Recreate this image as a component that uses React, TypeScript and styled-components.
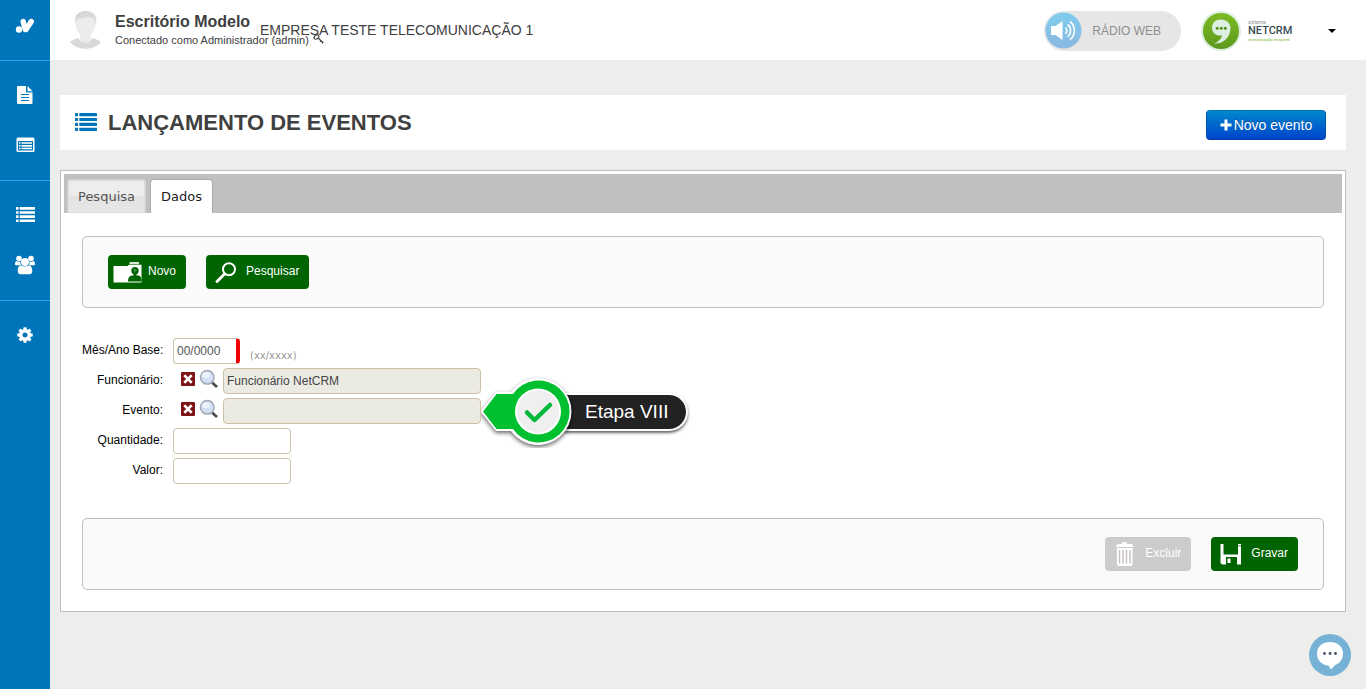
import React from "react";
import styled, { createGlobalStyle, css } from "styled-components";

const colors = {
  blue: "#0075b9",
  blueLine: "#2ba3ee",
  page: "#ededeb",
  text: "#404040",
  green: "#006400",
  line: "#bfbfbf",
  field: "#cdc0a6",
};

const GlobalStyle = createGlobalStyle`
  *, *::before, *::after { box-sizing: border-box; }
  body {
    margin: 0;
    background: ${colors.page};
    color: ${colors.text};
    font-family: "Liberation Sans", Arial, sans-serif;
    font-size: 12px;
  }
  button, input { font-family: inherit; margin: 0; }
  svg { display: block; flex: none; }
`;

const Page = styled.div`
  display: flex;
  min-height: 100vh;
`;

/* ---------- sidebar ---------- */

const Sidebar = styled.nav`
  flex: none;
  width: 50px;
  background: ${colors.blue};
`;

const Brand = styled.a`
  display: flex;
  align-items: center;
  justify-content: center;
  height: 60px;
  padding-bottom: 8px;
`;

const NavGroup = styled.div`
  min-height: 120px;
  padding-top: 9px;
  border-top: 1px solid ${colors.blueLine};
`;

const NavLink = styled.a`
  display: flex;
  align-items: center;
  justify-content: center;
  height: 50px;
  color: #fff;
`;

/* ---------- header ---------- */

const Main = styled.div`
  flex: 1;
  min-width: 0;
`;

const Header = styled.header`
  display: flex;
  align-items: center;
  height: 60px;
  padding: 1px 30px 0 18px;
  background: #fff;
`;

const User = styled.div`
  width: 145px;
  height: 40px;
  margin-left: 12px;
  white-space: nowrap;
`;

const Office = styled.div`
  font-size: 16px;
  font-weight: bold;
  line-height: 22px;
`;

const Account = styled.div`
  display: flex;
  align-items: center;
  gap: 4px;
  font-size: 11px;
  line-height: 14px;
`;

const Company = styled.div`
  flex: 1;
  padding-bottom: 2px;
  font-size: 14px;
  line-height: 16px;
  white-space: nowrap;
`;

const RadioButton = styled.button`
  display: flex;
  align-items: center;
  gap: 10px;
  height: 40px;
  padding: 0 20px 0 1px;
  border: 0;
  border-radius: 20px;
  background: #e6e6e6;
  color: #8f8f8f;
  font-size: 12px;
`;

const Product = styled.div`
  display: flex;
  align-items: center;
  gap: 7px;
  margin-left: 20px;
`;

const ProductText = styled.div`
  width: 45px;
  font-family: Roboto, sans-serif;
  white-space: nowrap;
`;

const ProductLine = styled.div<{ $green?: boolean }>`
  font-size: ${(p) => (p.$green ? 4 : 5)}px;
  line-height: 5px;
  color: ${(p) => (p.$green ? "#7fb93a" : "#8a969c")};
`;

const ProductName = styled.div`
  font-size: 11px;
  line-height: 12px;
  font-weight: 500;
  color: #3b4b55;
`;

const Caret = styled.button`
  margin-left: 35px;
  padding: 0;
  border: 0;
  background: none;
`;

/* ---------- title ---------- */

const Content = styled.main`
  padding: 35px 20px 0 10px;
`;

const TitleBar = styled.section`
  display: flex;
  align-items: center;
  height: 55px;
  padding: 0 20px 0 15px;
  background: #fff;
`;

const Title = styled.h1`
  flex: 1;
  margin: 0 0 0 11px;
  font-size: 22px;
  line-height: 30px;
`;

const NewEvent = styled.button`
  display: flex;
  align-items: center;
  justify-content: center;
  gap: 2px;
  width: 120px;
  height: 30px;
  padding: 0;
  margin-top: 4px;
  border: 1px solid #0055b3;
  border-color: #0077b3 #0055b3 #003da8;
  border-radius: 4px;
  background: linear-gradient(#0088cc, #0044cc);
  color: #fff;
  font-size: 14px;
  text-shadow: 0 -1px 0 rgba(0, 0, 0, 0.25);
`;

/* ---------- tabs ---------- */

const Card = styled.section`
  margin-top: 20px;
  padding: 3px;
  border: 1px solid ${colors.line};
  background: #fff;
`;

const TabList = styled.div`
  display: flex;
  align-items: flex-end;
  gap: 4px;
  height: 39px;
  padding-left: 3px;
  background: #c0c0c0;
`;

const Tab = styled.button<{ $active?: boolean }>`
  height: 34px;
  padding: 0 10px;
  border: 1px solid #d3d3d3;
  border-bottom: 0;
  border-radius: 4px 4px 0 0;
  background: linear-gradient(#ededed 50%, #e2e2e2 50%, #e8e8e8);
  color: #555;
  font-family: "DejaVu Sans", Verdana, sans-serif;
  font-size: 13px;
  box-shadow: inset 0 0 0 1px #dcdcdc;
  ${(p) =>
    p.$active &&
    css`
      border-color: #aaa;
      background: #fff;
      color: #212121;
      box-shadow: none;
    `}
`;

const Panel = styled.div`
  padding: 23px 18px 18px;
`;

const Toolbar = styled.div<{ $end?: boolean }>`
  display: flex;
  align-items: center;
  justify-content: ${(p) => (p.$end ? "flex-end" : "flex-start")};
  gap: 20px;
  height: 72px;
  padding: 0 25px;
  border: 1px solid ${colors.line};
  border-radius: 5px;
  background: #fafafa;
`;

const Action = styled.button`
  display: grid;
  grid-template-columns: 35px auto;
  align-items: center;
  height: 34px;
  padding: 0 10px 0 5px;
  border: 0;
  border-radius: 4px;
  background: ${colors.green};
  color: #fff;
  font-size: 12px;
  &:disabled {
    background: #ccc;
    color: #fff;
  }
`;

const ActionText = styled.span`
  padding-bottom: 2px;
`;

/* ---------- form ---------- */

const Form = styled.form`
  display: flex;
  flex-direction: column;
  gap: 4px;
  padding: 30px 0 34px;
`;

const Row = styled.div`
  display: flex;
  align-items: center;
  height: 26px;
`;

const Label = styled.label`
  width: 81px;
  margin-right: 10px;
  padding-bottom: 2px;
  color: #000;
  line-height: 14px;
  text-align: right;
  white-space: nowrap;
`;

const Input = styled.input<{ $w: number; $required?: boolean }>`
  width: ${(p) => p.$w}px;
  height: 26px;
  padding: 0 3px;
  border: 1px solid ${colors.field};
  border-radius: 4px;
  background: #fff;
  color: #555;
  font-size: 12px;
  ${(p) => p.$required && css`border-right: 4px solid #f00000;`}
  &:read-only {
    background: #ebebe4;
    color: #444;
  }
`;

const Hint = styled.span`
  align-self: flex-end;
  margin-left: 10px;
  color: #999;
  font-family: "DejaVu Sans", Verdana, sans-serif;
  font-size: 10px;
  line-height: 16px;
`;

const IconButton = styled.button`
  padding: 0;
  border: 0;
  background: none;
`;

const Lookup = styled.div`
  display: flex;
  align-items: center;
  gap: 4px;
  width: 50px;
  height: 26px;
  padding: 0 0 5px 8px;
`;

const FieldWrap = styled.div`
  position: relative;
`;

const Callout = styled.div`
  position: absolute;
  top: -22px;
  left: 100%;
  z-index: 1;
  display: flex;
  align-items: center;
`;

const CalloutText = styled.div`
  height: 38px;
  margin-left: -10px;
  padding: 0 18px 0 21px;
  border: 2px solid #fff;
  border-left: 0;
  border-radius: 0 20px 20px 0;
  background: #222;
  box-shadow: 0 2px 3px rgba(0, 0, 0, 0.6);
  color: #fff;
  font-size: 19px;
  line-height: 34px;
  white-space: nowrap;
`;

const Pin = styled.svg`
  position: relative;
  z-index: 1;
`;

const PinShadow = styled.g`
  filter: drop-shadow(0 2px 2px rgba(0, 0, 0, 0.6));
`;

const Chat = styled.button`
  position: fixed;
  right: 15px;
  bottom: 13px;
  padding: 0;
  border: 0;
  background: none;
`;

/* ---------- drawings ---------- */

const BrandIcon = () => (
  <svg width="20" height="16" viewBox="0 0 20 16" fill="none" stroke="#fff" strokeLinecap="round">
    <circle cx="4" cy="11.500" r="3.200" fill="#fff" stroke="none" />
    <path d="M8.200 3.500 10.300 11.500" strokeWidth="5.400" />
    <path d="M16.300 3.500 11 11.500" strokeWidth="5.400" />
  </svg>
);

const DocIcon = () => (
  <svg width="18" height="20" viewBox="0 0 18 20" fill="#fff">
    <path d="M2 1h8v6.500h6.500V18a1 1 0 0 1-1 1H2a1 1 0 0 1-1-1V2a1 1 0 0 1 1-1z" />
    <path d="M11.500 1l5 5.200h-5z" />
    <path d="M5 9.500h8M5 12.500h8M5 15.500h8" stroke={colors.blue} strokeWidth="1.200" />
  </svg>
);

const CardIcon = () => (
  <svg width="19" height="16" viewBox="0 0 19 16">
    <rect x="0.500" y="0.500" width="18" height="14.500" rx="1.500" fill="#fff" />
    <rect x="2" y="4" width="15" height="9.500" fill={colors.blue} />
    <path d="M3 6h1.500M3 8.800h1.500M3 11.500h1.500M5.500 6h10.500M5.500 8.800h10.500M5.500 11.500h10.500" stroke="#fff" strokeWidth="1.700" />
  </svg>
);

const ListIcon = ({ w, h, color }: { w: number; h: number; color: string }) => (
  <svg width={w} height={h} viewBox="0 0 22 18" preserveAspectRatio="none" fill={color}>
    {[0, 4.650, 9.300, 14].map((y) => (
      <React.Fragment key={y}>
        <rect x="0" y={y} width="3" height="3" rx="0.400" />
        <rect x="4.300" y={y} width="17.700" height="3" rx="0.400" />
      </React.Fragment>
    ))}
  </svg>
);

const GroupIcon = () => (
  <svg width="20" height="20" viewBox="0 0 20 20" fill="#fff">
    <circle cx="4" cy="3.500" r="2.800" />
    <circle cx="16" cy="3.500" r="2.800" />
    <path d="M0 9.500C0 7.500.6 6 1.700 6c1 .9 2.800 1.100 4 .5-.5 1.500-.2 2.700.4 3.700H1.500C.6 10.200 0 10 0 9.500zM20 9.500c0-2-.6-3.500-1.700-3.500-1 .9-2.800 1.100-4 .5.500 1.500.2 2.700-.4 3.700h4.600c.9 0 1.500-.2 1.500-.7z" />
    <circle cx="10" cy="7" r="4" />
    <path d="M6 10.200c2 1.600 6 1.600 8 0 2.300.3 3.300 2.800 3.300 5.800 0 2-1 3.200-2.700 3.200H5.400c-1.700 0-2.700-1.200-2.700-3.200 0-3 1-5.500 3.300-5.800z" />
  </svg>
);

const GearIcon = () => (
  <svg width="16" height="18" viewBox="0 0 1536 1792" fill="#fff">
    <path d="M1024 896q0-106-75-181t-181-75-181 75-75 181 75 181 181 75 181-75 75-181zm512-109v222q0 12-8 23t-20 13l-185 28q-19 54-39 91 35 50 107 138 10 12 10 25t-9 23q-27 37-99 108t-94 71q-12 0-26-9l-138-108q-44 23-91 38-16 136-29 186-7 28-36 28h-222q-14 0-24.500-8.500t-11.500-21.500l-28-184q-49-16-90-37l-141 107q-10 9-25 9-14 0-25-11-126-114-165-168-7-10-7-23 0-12 8-23 15-21 51-66.500t54-70.500q-27-50-41-99l-183-27q-13-2-21-12.500t-8-23.500v-222q0-12 8-23t19-13l186-28q14-46 39-92-40-57-107-138-10-12-10-24 0-10 9-23 26-36 98.500-107.500t94.500-71.500q13 0 26 10l138 107q44-23 91-38 16-136 29-186 7-28 36-28h222q14 0 24.500 8.500t11.500 21.500l28 184q49 16 90 37l142-107q9-9 24-9 13 0 25 10 129 119 165 170 7 8 7 22 0 12-8 23-15 21-51 66.500t-54 70.500q26 50 41 98l183 28q13 2 21 12.500t8 23.500z" />
  </svg>
);

const Avatar = () => (
  <svg width="35" height="40" viewBox="0 0 35 40">
    <defs>
      <linearGradient id="hair" x1="0" y1="0" x2="1" y2="1">
        <stop offset="0" stopColor="#d2d2d2" />
        <stop offset="1" stopColor="#e0e0e0" />
      </linearGradient>
    </defs>
    <path d="M2 31c2-2 5-3 8.500-4C13 33 22 33 24.500 27c3.500 1 6.500 2 8.500 4-6 9-25 9-31 0z" fill="#d9d9d9" />
    <path d="M12 21h11v6c0 6-11 6-11 0z" fill="#ebebeb" />
    <path d="M7 10C7 3 12 0 17.500 0S28 3 28 10c0 3.500-1 6-2 8-1.500 5-4.500 9-8.500 9S10.500 23 9 18c-1-2-2-4.500-2-8z" fill="#ececec" />
    <path d="M7 12C6 4 11 0 18 0s12 5 10 13c-1-3-2-5-4-6-4-2-8 1-14 .5-1.500 1-2.500 2-3 4.500z" fill="url(#hair)" />
  </svg>
);

const KeyIcon = () => (
  <svg width="11" height="11" viewBox="0 0 11 11" fill="none" stroke="#404040">
    <ellipse cx="3.500" cy="3" rx="2.600" ry="1.900" transform="rotate(-35 3.500 3)" strokeWidth="1.200" />
    <path d="M5 4l5 4.500M7.200 7.800l1.300-1.500M9 9.300l1.300-1.500" strokeWidth="1.200" />
  </svg>
);

const SpeakerIcon = () => (
  <svg width="37" height="37" viewBox="0 0 37 37">
    <defs>
      <linearGradient id="sky" x1="0" y1="0" x2="0" y2="1">
        <stop offset="0" stopColor="#80cdee" />
        <stop offset="1" stopColor="#8ab8e0" />
      </linearGradient>
    </defs>
    <circle cx="18.500" cy="18.500" r="18" fill="url(#sky)" />
    <path d="M6 14h4.500l7-5v19l-7-5H6z" fill="#fff" />
    <path d="M20.500 15.500c1.800 1.600 1.800 4.600 0 6.200M22.700 12.500c3.800 3 3.800 9.200 0 12.200M25 9.500c5.800 4.500 5.800 13.700 0 18.200" fill="none" stroke="#fff" strokeWidth="1.600" />
  </svg>
);

const ProductIcon = () => (
  <svg width="40" height="40" viewBox="0 0 40 40">
    <defs>
      <linearGradient id="leaf" x1="0" y1="0" x2="0" y2="1">
        <stop offset="0" stopColor="#7dbb22" />
        <stop offset="1" stopColor="#5c981d" />
      </linearGradient>
    </defs>
    <circle cx="20" cy="20" r="20" fill="#dcefe0" />
    <circle cx="20" cy="20" r="18" fill="url(#leaf)" />
    <path d="M20 8.500c-5.500 0-9 3.500-9 8.200 0 4.500 3.300 7.800 8 7.800.7 0 1.500-.1 2.200-.3-1 4-4 6.800-8.200 8.300 9.500.5 16.500-6.500 16.500-15.300C29.500 12 25.800 8.500 20 8.500z" fill="#dcefe0" />
    <circle cx="16.300" cy="17.300" r="1.500" fill="#55911a" />
    <circle cx="20.300" cy="17.300" r="1.500" fill="#55911a" />
    <circle cx="24.300" cy="17.300" r="1.500" fill="#55911a" />
  </svg>
);

const PlusIcon = () => (
  <svg width="12" height="12" viewBox="0 0 12 12">
    <path d="M6 0.500v11M0.500 6h11" stroke="#fff" strokeWidth="3" />
  </svg>
);

const FolderUserIcon = () => (
  <svg width="30" height="22" viewBox="0 0 30 22" fill="#fff">
    <path d="M16.500 1h9.500v2.200H16.500z" opacity="0.850" />
    <path d="M0.500 5h14l1.500-1.300h12.500V21.500h-28z" />
    <circle cx="22" cy="9.800" r="3.700" fill={colors.green} />
    <path d="M15 20.500c0-4 1.500-5.500 4-6h6.500c2 .5 3 2 3 6z" fill={colors.green} />
    <path d="M20.500 12h3v3h-3z" fill={colors.green} />
    <circle cx="22" cy="9.200" r="1.500" opacity="0.250" />
  </svg>
);

const SearchIcon = () => (
  <svg width="30" height="24" viewBox="0 0 30 24" fill="none" stroke="#fff">
    <circle cx="18" cy="9.300" r="6" strokeWidth="2" />
    <path d="M13.500 14l-7.500 7.500" strokeWidth="3" strokeLinecap="round" />
  </svg>
);

const TrashIcon = () => (
  <svg width="30" height="26" viewBox="0 0 30 26" fill="#fff">
    <path d="M12 1.200h5V3h4.500q2 .5 2 3H6q0-2.500 2-3h4z" />
    <path d="M7 7h15.500v16q0 2-2 2H9q-2 0-2-2z" />
    <path d="M9.500 9v13.500M13 9v13.500M16.500 9v13.500M20 9v13.500" stroke="#c8c0c0" strokeWidth="1.400" />
  </svg>
);

const SaveIcon = () => (
  <svg width="30" height="22" viewBox="0 0 30 22" fill="#fff">
    <path d="M4.500 1H7.500v10.500h14.500V1h3v20.500h-4v-7.500H10v7.500H6l-1.500-1.500z" />
    <path d="M11.500 15.500H14.500V20h-3z" />
    <path d="M22 2.800h3" stroke={colors.green} strokeWidth="0.700" />
  </svg>
);

const ClearIcon = () => (
  <svg width="14" height="14" viewBox="0 0 14 14">
    <rect width="14" height="14" rx="1" fill="#7d1416" />
    <path d="M4.200 4.200l5.600 5.600M9.800 4.200l-5.600 5.600" stroke="#fff" strokeWidth="2.600" strokeLinecap="square" />
  </svg>
);

const LensIcon = () => (
  <svg width="20" height="20" viewBox="0 0 20 20">
    <path d="M13 13.500l5 4.500" stroke="#4c4c50" strokeWidth="2.800" />
    <circle cx="8.300" cy="8.300" r="6.800" fill="#d3e0f4" stroke="#a2a8b6" strokeWidth="1.500" />
    <ellipse cx="7" cy="6.300" rx="4" ry="3" fill="#edf3fc" />
  </svg>
);

const PinDrawing = () => (
  <Pin width="93" height="72" viewBox="1 0 93 72">
    <PinShadow>
      <path d="M1 35.500L16 16.500H31A33 33 0 1 1 31 54.500H16z" fill="#fff" stroke="#fff" strokeWidth="1" strokeLinejoin="round" />
    </PinShadow>
    <path d="M3 35.500L16.500 18H33A31 31 0 1 1 33 53H16.500z" fill="#00c02f" />
    <circle cx="58" cy="35.500" r="23" fill="#fff" />
    <circle cx="58" cy="35.500" r="21" fill="#efefef" />
    <path d="M47 36.500l7.500 7.500L70 29" fill="none" stroke="#00b83a" strokeWidth="4.500" strokeLinecap="round" strokeLinejoin="round" />
  </Pin>
);

const ChatIcon = () => (
  <svg width="42" height="42" viewBox="0 0 42 42">
    <circle cx="21" cy="21" r="21" fill="#76b2d6" />
    <path d="M21 8C13.500 8 8 12.500 8 19.500S13 31 19.500 31.500L22 35.500l4-4.500c5-1.500 8-6 8-11.500C34 12.500 28.500 8 21 8z" fill="#fff" />
    <circle cx="15.500" cy="19.500" r="1.400" fill="#44506e" />
    <circle cx="21" cy="19.500" r="1.400" fill="#44506e" />
    <circle cx="26.500" cy="19.500" r="1.400" fill="#44506e" />
  </svg>
);

/* ---------- page ---------- */

const LookupButtons = ({ name }: { name: string }) => (
  <Lookup>
    <IconButton type="button" aria-label={`Limpar ${name}`}>
      <ClearIcon />
    </IconButton>
    <IconButton type="button" aria-label={`Buscar ${name}`}>
      <LensIcon />
    </IconButton>
  </Lookup>
);

export default function App() {
  return (
    <Page>
      <GlobalStyle />
      <Sidebar>
        <Brand href="#" aria-label="Início">
          <BrandIcon />
        </Brand>
        <NavGroup>
          <NavLink href="#" aria-label="Documentos"><DocIcon /></NavLink>
          <NavLink href="#" aria-label="Cadastros"><CardIcon /></NavLink>
        </NavGroup>
        <NavGroup>
          <NavLink href="#" aria-label="Eventos"><ListIcon w={19} h={16} color="#fff" /></NavLink>
          <NavLink href="#" aria-label="Funcionários"><GroupIcon /></NavLink>
        </NavGroup>
        <NavGroup>
          <NavLink href="#" aria-label="Configurações"><GearIcon /></NavLink>
        </NavGroup>
      </Sidebar>
      <Main>
        <Header>
          <Avatar />
          <User>
            <Office>Escritório Modelo</Office>
            <Account>
              Conectado como Administrador (admin)
              <KeyIcon />
            </Account>
          </User>
          <Company>EMPRESA TESTE TELECOMUNICAÇÃO 1</Company>
          <RadioButton type="button">
            <SpeakerIcon />
            RÁDIO WEB
          </RadioButton>
          <Product>
            <ProductIcon />
            <ProductText>
              <ProductLine>sistema</ProductLine>
              <ProductName>NETCRM</ProductName>
              <ProductLine $green>comunicação netspeed</ProductLine>
            </ProductText>
          </Product>
          <Caret type="button" aria-label="Abrir menu">
            <svg width="8" height="4" viewBox="0 0 8 4"><path d="M0 0h8L4 4z" /></svg>
          </Caret>
        </Header>
        <Content>
          <TitleBar>
            <ListIcon w={22} h={19} color={colors.blue} />
            <Title>LANÇAMENTO DE EVENTOS</Title>
            <NewEvent type="button">
              <PlusIcon />
              Novo evento
            </NewEvent>
          </TitleBar>
          <Card>
            <TabList role="tablist">
              <Tab type="button" role="tab" aria-selected={false}>Pesquisa</Tab>
              <Tab type="button" role="tab" aria-selected $active>Dados</Tab>
            </TabList>
            <Panel role="tabpanel">
              <Toolbar>
                <Action type="button"><FolderUserIcon /><ActionText>Novo</ActionText></Action>
                <Action type="button"><SearchIcon /><ActionText>Pesquisar</ActionText></Action>
              </Toolbar>
              <Form>
                <Row>
                  <Label htmlFor="base">Mês/Ano Base:</Label>
                  <Input id="base" $w={67} $required defaultValue="00/0000" />
                  <Hint>(xx/xxxx)</Hint>
                </Row>
                <Row>
                  <Label htmlFor="employee">Funcionário:</Label>
                  <LookupButtons name="funcionário" />
                  <Input id="employee" $w={258} readOnly value="Funcionário NetCRM" />
                </Row>
                <Row>
                  <Label htmlFor="event">Evento:</Label>
                  <LookupButtons name="evento" />
                  <FieldWrap>
                    <Input id="event" $w={258} readOnly value="" />
                    <Callout>
                      <PinDrawing />
                      <CalloutText>Etapa VIII</CalloutText>
                    </Callout>
                  </FieldWrap>
                </Row>
                <Row>
                  <Label htmlFor="amount">Quantidade:</Label>
                  <Input id="amount" $w={118} />
                </Row>
                <Row>
                  <Label htmlFor="value">Valor:</Label>
                  <Input id="value" $w={118} />
                </Row>
              </Form>
              <Toolbar $end>
                <Action type="button" disabled><TrashIcon /><ActionText>Excluir</ActionText></Action>
                <Action type="button"><SaveIcon /><ActionText>Gravar</ActionText></Action>
              </Toolbar>
            </Panel>
          </Card>
        </Content>
      </Main>
      <Chat type="button" aria-label="Abrir chat">
        <ChatIcon />
      </Chat>
    </Page>
  );
}
